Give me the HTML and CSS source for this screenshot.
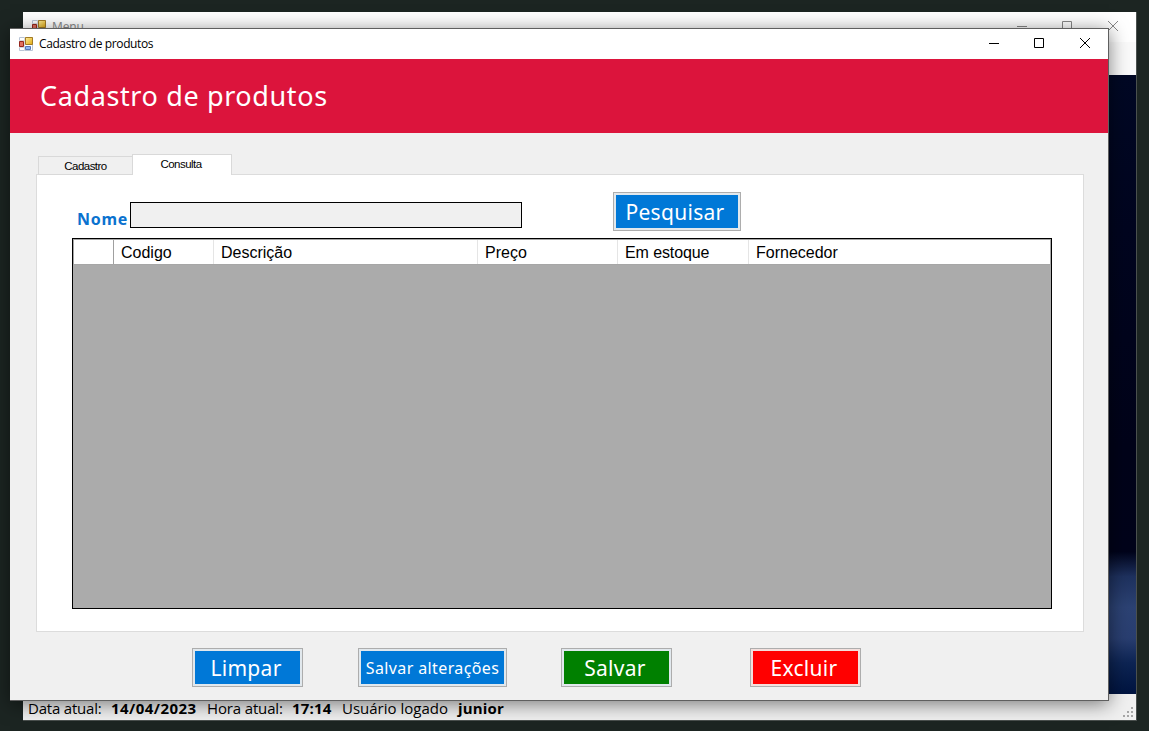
FILE: index.html
```html
<!DOCTYPE html>
<html lang="pt-BR">
<head>
<meta charset="utf-8">
<title>Cadastro de produtos</title>
<link rel="stylesheet" href="styles.css">
</head>
<body>
<svg class="defs" width="0" height="0" aria-hidden="true">
  <defs>
    <linearGradient id="gold" x1="0" y1="0" x2="1" y2="1"><stop offset="0" stop-color="#ffee9c"/><stop offset="1" stop-color="#e0a810"/></linearGradient>
    <symbol id="form" viewBox="0 0 14 14">
      <path fill="#fff" stroke="#b9c5d6" d="M.5.5h13v13H.5z"/>
      <path stroke="#d5d9e0" d="M5.500 0v14M0 3.500h6M0 10.500h6"/>
      <path fill="#e0705f" stroke="#96261c" d="M.5 4.500h4v5h-4z"/>
      <path fill="url(#gold)" stroke="#a37b24" d="M6.500.5h7v7h-7z"/>
      <path fill="#8db6f2" stroke="#5878b8" d="M6.500 9.500h5v3h-5z"/>
    </symbol>
  </defs>
</svg>
<div class="desktop">
  <section class="window menu">
    <header class="titlebar menu-title">
      <svg class="app-icon"><use href="#form"/></svg>
      <span class="caption">Menu</span>
      <div class="controls">
        <svg viewBox="0 0 10 10"><path d="M0 5.500h10"/></svg>
        <svg viewBox="0 0 10 10"><path d="M.5.5h9v9h-9z"/></svg>
        <svg viewBox="0 0 10 10"><path d="M0 0l10 10M10 0L0 10"/></svg>
      </div>
    </header>
    <div class="menu-strip"></div>
    <div class="wallpaper"></div>
    <footer class="status">
      <span class="s-data">Data atual:</span><b class="s-date">14/04/2023</b>
      <span class="s-hora">Hora atual:</span><b class="s-time">17:14</b>
      <span class="s-user">Usuário logado</span><b class="s-name">junior</b>
      <svg class="grip" viewBox="0 0 11 11"><path d="M8 0h2v2H8zM4 4h2v2H4zM8 4h2v2H8zM0 8h2v2H0zM4 8h2v2H4zM8 8h2v2H8z"/></svg>
    </footer>
  </section>

  <section class="window produtos">
    <header class="titlebar">
      <svg class="app-icon"><use href="#form"/></svg>
      <span class="caption">Cadastro de produtos</span>
      <div class="controls">
        <svg viewBox="0 0 10 10"><path d="M0 5.500h10"/></svg>
        <svg viewBox="0 0 10 10"><path d="M.5.5h9v9h-9z"/></svg>
        <svg viewBox="0 0 10 10"><path d="M0 0l10 10M10 0L0 10"/></svg>
      </div>
    </header>
    <h1 class="banner"><span>Cadastro de produtos</span></h1>
    <nav class="tabs">
      <div class="tab"><span>Cadastro</span></div>
      <div class="tab active"><span>Consulta</span></div>
    </nav>
    <main class="page">
      <div class="search">
        <label for="nome">Nome</label>
        <input id="nome" type="text">
        <button class="btn find">Pesquisar</button>
      </div>
      <div class="grid">
        <div class="grid-head">
          <div class="corner"></div>
          <div>Codigo</div>
          <div>Descrição</div>
          <div>Preço</div>
          <div>Em estoque</div>
          <div>Fornecedor</div>
        </div>
      </div>
    </main>
    <div class="actions">
      <button class="btn clear">Limpar</button>
      <button class="btn update">Salvar alterações</button>
      <button class="btn save">Salvar</button>
      <button class="btn remove">Excluir</button>
    </div>
  </section>
</div>
</body>
</html>
```
FILE: styles.css
```css
* { box-sizing: border-box; }
body { margin: 0; font-family: "Open Sans", "Noto Sans", sans-serif; color: #000; }
.defs { position: absolute; }
.desktop { position: relative; width: 1149px; height: 731px; overflow: hidden; background: #1c2522; }
.window { position: absolute; display: flex; flex-direction: column; }

.menu { left: 23px; top: 12px; width: 1114px; height: 709px; background: #fff; border-right: 1px solid #4a504e; border-bottom: 1px solid #4a504e; }
.produtos { left: 10px; top: 28px; width: 1099px; height: 673px; background: #f0f0f0; border: 1px solid #5f5f5f; border-left: 0; box-shadow: 0 3px 18px rgba(0, 0, 0, .5); }

.titlebar { display: flex; align-items: center; flex: none; height: 30px; padding-left: 9px; background: #fff; }
.app-icon { width: 14px; height: 14px; margin-right: 6px; }
.caption { font-size: 12px; line-height: 16px; letter-spacing: -.4px; white-space: nowrap; }
.controls { display: flex; gap: 36px; margin: 0 18px 2px auto; }
.controls svg { width: 10px; height: 10px; fill: none; stroke: #000; stroke-width: 1; overflow: visible; }
.controls svg:first-child { margin-right: -1px; }
.menu-title .caption { color: #888; font-size: 12px; letter-spacing: -.1px; }
.menu-title .controls svg { stroke: #888; }
.menu-strip { flex: none; height: 33px; background: #fafafa; }
.wallpaper { flex: 1; background: linear-gradient(180deg, #000824 0%, #00051f 25%, #000319 60%, #00031a 77%, #1e315e 81%, #2c4273 86%, #293e70 91%, #0d2453 95%, #001440 100%); }
.status { display: flex; flex: none; position: relative; height: 26px; padding-left: 5px; font-size: 15px; line-height: 28px; white-space: nowrap; background: #f0f0f0; }
.status span, .status b { flex: none; }
.s-data { width: 83px; letter-spacing: -.2px; }
.s-date { width: 96px; letter-spacing: .45px; }
.s-hora { width: 85px; letter-spacing: -.15px; }
.s-time { width: 50px; letter-spacing: .2px; }
.s-user { width: 116px; }
.s-name { letter-spacing: .15px; }
.grip { position: absolute; right: 2px; bottom: 2px; width: 11px; height: 11px; fill: #a6a6a6; }

.banner { display: flex; align-items: center; flex: none; height: 74px; margin: 0; padding-left: 30px; background: #dc143c; color: #fff; font: 400 27px/36px "Noto Sans", sans-serif; letter-spacing: .62px; }
.tabs { display: flex; align-items: flex-end; flex: none; height: 42px; margin-bottom: -1px; padding-left: 28px; z-index: 1; }
.tab { display: flex; justify-content: center; width: 94px; height: 19px; border: 1px solid #d9d9d9; border-right: 0; font: 11.500px/18px "Liberation Sans", sans-serif; letter-spacing: -.55px; }
.tab.active { width: 100px; height: 21px; border: 1px solid #d9d9d9; border-bottom: 0; background: #fff; padding-right: 2px; }
.page { flex: none; width: 1048px; height: 458px; margin-left: 26px; padding: 17px 0 0 35px; border: 1px solid #dcdcdc; background: #fff; }
.search { display: flex; height: 46px; }
.search label { width: 58px; padding: 17px 0 0 5px; color: #0a72cf; font: 700 16px/20px "Noto Sans", sans-serif; letter-spacing: .7px; }
.search input { width: 392px; height: 26px; margin: 10px 91px 0 0; padding: 2px 4px; border: 1px solid #000; border-radius: 0; background: #f0f0f0; outline: 0; }
.btn { flex: none; width: 111px; height: 39px; padding: 0; border: 1px solid #adadad; border-radius: 0; box-shadow: inset 0 0 0 2px #e1e8ed; background: #0078d7; color: #fff; font: 21px/30px "Noto Sans", sans-serif; letter-spacing: .3px; white-space: nowrap; }
.find { width: 128px; padding-right: 4px; }
.grid { width: 980px; height: 371px; border: 1px solid #000; background: #ababab; }
.grid-head { display: flex; height: 26px; border: 1px solid #a6a6a6; background: #fff; font: 16px/26px "Liberation Sans", sans-serif; }
.grid-head > div { width: 264px; padding-left: 7px; border-right: 1px solid #e5e5e5; white-space: nowrap; }
.grid-head > .corner { width: 40px; border-color: #a0a0a0; }
.grid-head > :nth-child(2) { width: 100px; }
.grid-head > :nth-child(4) { width: 140px; }
.grid-head > :nth-child(5) { width: 131px; letter-spacing: -.1px; }
.grid-head > :last-child { flex: 1; border: 0; }
.actions { display: flex; padding: 16px 0 0 182px; }
.clear, .remove { padding-right: 3px; }
.update { width: 149px; margin: 0 54px 0 55px; font-size: 16px; letter-spacing: .38px; }
.save { margin-right: 78px; padding-right: 3px; background: #008000; }
.remove { background: #f00; box-shadow: inset 0 0 0 2px #f3dfdc; }
```
